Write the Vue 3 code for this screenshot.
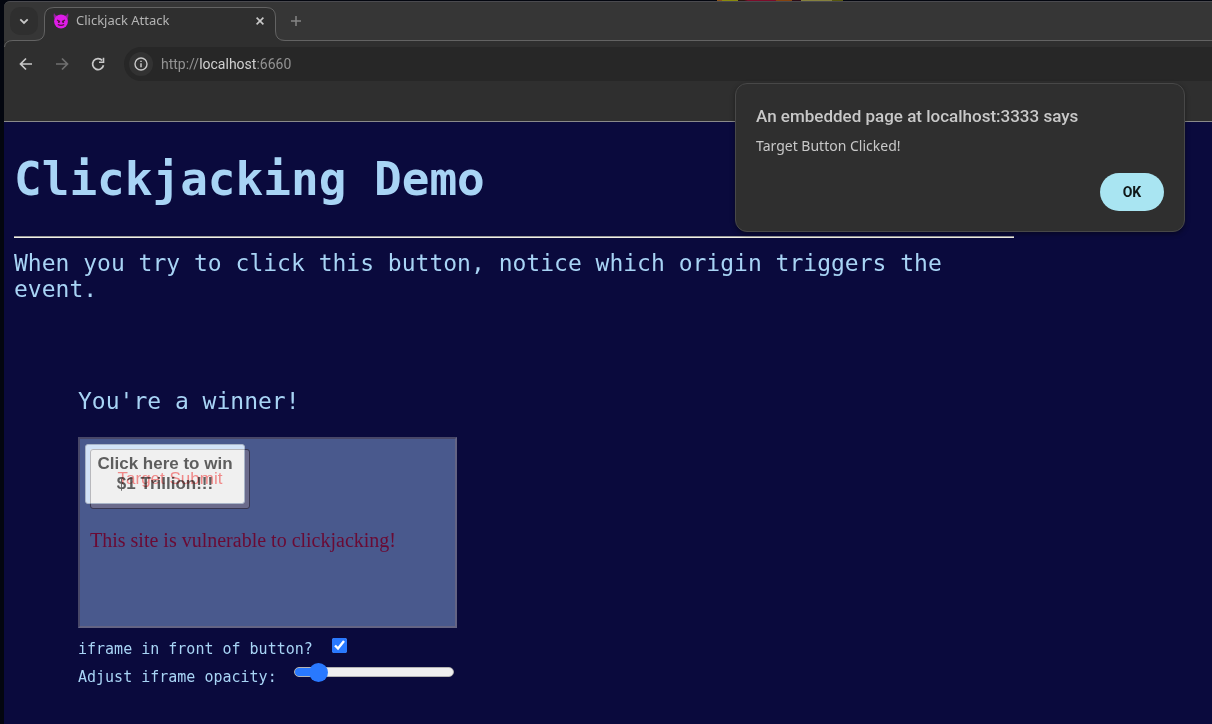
<script setup>
import { ref } from 'vue'

const address = ref('http://localhost:6660')
const inFront = ref(true)
const opacity = ref(10)
</script>

<template>
  <div class="desktop">
    <div class="window">
      <header class="chrome">
        <div class="tabstrip">
          <svg class="outline" width="290" height="46" viewBox="0 0 290 46" aria-hidden="true">
            <path d="M0.500 46Q1 39.500 9 39.500H31Q40.500 39.500 40.500 30V16Q40.500 6.500 50 6.500H262Q271.500 6.500 271.500 16V30Q271.500 39.500 281 39.500H290V46Z" fill="#2f2f2f" />
            <path d="M0.500 46Q1 39.500 9 39.500H31Q40.500 39.500 40.500 30V16Q40.500 6.500 50 6.500H262Q271.500 6.500 271.500 16V30Q271.500 39.500 281 39.500H290" fill="none" stroke="#636363" />
          </svg>
          <button class="search-tabs" aria-label="Search tabs">
            <svg width="10" height="7" viewBox="0 0 10 7"><path d="M1.300 1.300L5 5L8.700 1.300" fill="none" stroke="#c8c8c8" stroke-width="1.800" /></svg>
          </button>
          <div class="tab">
            <svg class="favicon" width="16" height="16" viewBox="0 0 16 16" aria-hidden="true">
              <path d="M1 0C0 3 1 6 3 7L6 3C3 3 2 2 1 0ZM15 0C16 3 15 6 13 7L10 3C13 3 14 2 15 0Z" fill="#93209b" />
              <circle cx="8" cy="8.500" r="6.900" fill="#de1ce8" />
              <path d="M4 7L7 8.600M12 7L9 8.600M4.800 11.400Q8 13.200 11.200 11.400" fill="none" stroke="#5b1340" stroke-width="1.200" />
              <circle cx="5.800" cy="9" r="1" fill="#4b1733" /><circle cx="10.200" cy="9" r="1" fill="#4b1733" />
            </svg>
            <span class="tab-title">Clickjack Attack</span>
            <button class="plain" aria-label="Close tab">
              <svg width="8" height="8" viewBox="0 0 8 8"><path d="M0.600 0.600L7.400 7.400M7.400 0.600L0.600 7.400" stroke="#c8c8c8" stroke-width="1.600" /></svg>
            </button>
          </div>
          <div class="strip-rest">
            <button class="plain" aria-label="New tab">
              <svg width="10" height="10" viewBox="0 0 10 10"><path d="M5 0V10M0 5H10" stroke="#858585" stroke-width="1.500" /></svg>
            </button>
          </div>
        </div>
        <div class="toolbar">
          <button class="nav" aria-label="Back">
            <svg width="16" height="16" viewBox="0 0 16 16"><path d="M14 8H3M8 2.500L2.500 8L8 13.500" fill="none" stroke="#c8c8c8" stroke-width="1.700" /></svg>
          </button>
          <button class="nav" aria-label="Forward">
            <svg width="16" height="16" viewBox="0 0 16 16"><path d="M2 8H13M8 2.500L13.500 8L8 13.500" fill="none" stroke="#707070" stroke-width="1.700" /></svg>
          </button>
          <button class="nav" aria-label="Reload">
            <svg width="16" height="16" viewBox="0 0 16 16"><path d="M13.500 9.300A5.500 5.500 0 1 1 12.200 4.400" fill="none" stroke="#c8c8c8" stroke-width="1.700" /><path d="M14.300 1.800V7H9V5.400H12.700V1.800Z" fill="#c8c8c8" /></svg>
          </button>
          <div class="omnibox">
            <button class="info" aria-label="Site information">
              <svg width="14" height="14" viewBox="0 0 14 14"><circle cx="7" cy="7" r="6" fill="none" stroke="#c8c8c8" stroke-width="1.400" /><path d="M7 6.200V10.300M7 3.700V5.100" stroke="#c8c8c8" stroke-width="1.500" /></svg>
            </button>
            <a class="url" :href="address">http://<b>localhost</b>:6660</a>
          </div>
        </div>
        <div class="bookmarks"></div>
      </header>

      <main class="page">
        <h1>Clickjacking Demo</h1>
        <hr />
        <p class="intro">When you try to click this button, notice which origin triggers the event.</p>
        <section class="demo">
          <p class="winner">You're a winner!</p>
          <div class="frame">
            <div class="shade"></div>
            <button class="win">Click here to win $1 Trillion!!!</button>
            <button class="target">Target Submit</button>
            <p class="warning">This site is vulnerable to clickjacking!</p>
          </div>
          <div class="row front">
            <label for="front">iframe in front of button?</label>
            <input id="front" v-model="inFront" type="checkbox" />
          </div>
          <div class="row">
            <label for="opacity">Adjust iframe opacity:</label>
            <input
              id="opacity"
              v-model="opacity"
              type="range"
              min="0"
              max="100"
              :style="{ '--level': opacity + '%' }"
            />
          </div>
        </section>
      </main>
    </div>

    <div class="dialog" role="alertdialog" aria-labelledby="dialog-title" aria-describedby="dialog-text">
      <h2 id="dialog-title">An embedded page at localhost:3333 says</h2>
      <p id="dialog-text">Target Button Clicked!</p>
      <button class="ok">OK</button>
    </div>
  </div>
</template>

<style>
body {
  margin: 0;
  background: #0a0a3d;
}
</style>

<style scoped>
* {
  box-sizing: border-box;
}
button {
  border: 0;
  padding: 0;
  margin: 0;
  background: none;
}
svg {
  display: block;
}
.desktop {
  position: relative;
  min-height: 100vh;
  padding: 1px 0 0 4px;
  overflow: hidden;
  display: flex;
  background:
    linear-gradient(90deg, transparent 717px, #8d5417 717px 722px, #8a8a0d 722px 738px, #2a1611 738px 744px, #7d0c2a 748px 776px, #85430e 776px 792px, #2a0c16 792px 801px, #86813f 801px 832px, #57570e 832px 843px, transparent 843px) top / 100% 1px no-repeat,
    #03060f;
}
.window {
  flex: 1;
  min-width: 0;
  display: flex;
  flex-direction: column;
}
.chrome {
  font-family: "Noto Sans", sans-serif;
  background: #2f2f2f;
  border-bottom: 1px solid #8a8a8a;
  border-top-left-radius: 6px;
}
.tabstrip {
  position: relative;
  display: flex;
  height: 40px;
  background: #363636;
  border-top: 1px solid #4a4a4f;
  border-top-left-radius: 6px;
}
.outline {
  position: absolute;
  left: 0;
  top: -1px;
}
.search-tabs {
  position: relative;
  width: 28px;
  height: 28px;
  margin: 5px 6px;
  border-radius: 10px;
  background: #2f2f2f;
  display: grid;
  place-items: center;
}
.tab {
  position: relative;
  width: 232px;
  height: 38px;
  display: flex;
  align-items: center;
  padding: 0 12px 0 9px;
}
.tab-title {
  flex: 1;
  padding: 0 0 2px 7px;
  font: 13px/20px "Noto Sans", sans-serif;
  color: #b4b4b4;
}
.strip-rest {
  flex: 1;
  display: flex;
  align-items: center;
  padding-left: 15px;
  border-bottom: 1px solid #636363;
}
.strip-rest .plain {
  position: relative;
}
.toolbar {
  position: relative;
  display: flex;
  align-items: center;
  height: 46px;
  padding-left: 14px;
}
.nav {
  width: 16px;
  margin-right: 20px;
}
.omnibox {
  flex: 1;
  display: flex;
  align-items: center;
  height: 34px;
  margin-left: -2px;
  padding-left: 5px;
  background: #272727;
  border-radius: 17px 0 0 17px;
}
.info {
  width: 24px;
  height: 24px;
  border-radius: 12px;
  background: #323232;
  display: grid;
  place-items: center;
}
.url {
  margin-left: 8px;
  font: 14px/20px Roboto, sans-serif;
  color: #939393;
  text-decoration: none;
}
.url b {
  font-weight: 400;
  color: #d0d0d0;
}
.bookmarks {
  height: 34px;
}
.page {
  flex: 1;
  padding: 30px 10px 32px;
  background: #0a0a3d;
  color: #a8d4f5;
  font: 23px/26px "DejaVu Sans Mono", monospace;
}
h1 {
  margin: 0;
  font-size: 46px;
  line-height: 54px;
}
hr {
  max-width: 1000px;
  height: 2px;
  margin: 30px 0 12px;
  border: 0;
  border-top: 1px solid #9a9a9a;
  background: #f0f0e8;
}
.intro {
  max-width: 1000px;
  margin: 0;
}
.demo {
  max-width: 443px;
  margin-top: 86px;
  padding-left: 64px;
}
.winner {
  margin: 0 0 23px;
}
.frame {
  position: relative;
  height: 191px;
  padding: 5px;
  border: 2px solid #646484;
  border-top-color: #484768;
  border-left-color: #484768;
  background: #49598d;
}
.shade,
.target {
  position: absolute;
  left: 10px;
  top: 10px;
  width: 160px;
  height: 60px;
  border-radius: 3px;
}
.shade {
  background: #6b6b8c;
  border: 1px solid #484768;
}
.win {
  position: relative;
  display: block;
  width: 160px;
  height: 60px;
  padding: 0 8px;
  border: 1px solid #a9b5c8;
  border-radius: 3px;
  background: #f0f0f0;
  box-shadow: inset 4px 4px 0 #d2e3f8;
  font: bold 17px/20px "Liberation Sans", sans-serif;
  color: #5e5e5e;
}
.target {
  border: 1px solid #c4c4c8;
  font: 17px/20px "Liberation Sans", sans-serif;
  color: #ff9292;
  mix-blend-mode: multiply;
}
.warning {
  margin: 24px 0 0 5px;
  font: 20px/24px "Liberation Serif", serif;
  color: #6a0a34;
}
.row {
  display: flex;
  align-items: center;
  height: 28px;
  font-size: 15px;
}
.row label {
  white-space: nowrap;
}
.front {
  margin-top: 7px;
}
.row input[type="checkbox"] {
  width: 15px;
  height: 15px;
  margin: 0 0 8px 19px;
  accent-color: #2979ff;
}
.row input[type="range"] {
  appearance: none;
  width: 160px;
  height: 20px;
  margin: 0 0 10px 17px;
  background: none;
}
.row input[type="range"]::-webkit-slider-runnable-track {
  box-sizing: border-box;
  height: 10px;
  border: 1px solid #b4b4b4;
  border-radius: 5px;
  background: linear-gradient(90deg, #2979ff var(--level), #efefef var(--level));
}
.row input[type="range"]::-webkit-slider-thumb {
  appearance: none;
  width: 19px;
  height: 19px;
  margin-top: -5px;
  border-radius: 50%;
  background: #2979ff;
}
.dialog {
  position: absolute;
  top: 83px;
  right: 27px;
  width: 450px;
  padding: 20px;
  display: flex;
  flex-direction: column;
  border: 1px solid #484848;
  border-radius: 12px;
  background: #2f2f2f;
  box-shadow: 0 2px 5px rgba(0, 0, 0, 0.4);
  color: #c8c8c8;
  font-family: "Noto Sans", sans-serif;
}
.dialog h2 {
  margin: 0;
  font: 500 17px/24px Roboto, sans-serif;
}
.dialog p {
  margin: 8px 0 17px;
  font-size: 14px;
  line-height: 20px;
}
.ok {
  align-self: flex-end;
  width: 64px;
  height: 38px;
  border-radius: 19px;
  background: #a9e5f2;
  color: #101818;
  font: bold 14px/20px Roboto, sans-serif;
}
</style>
